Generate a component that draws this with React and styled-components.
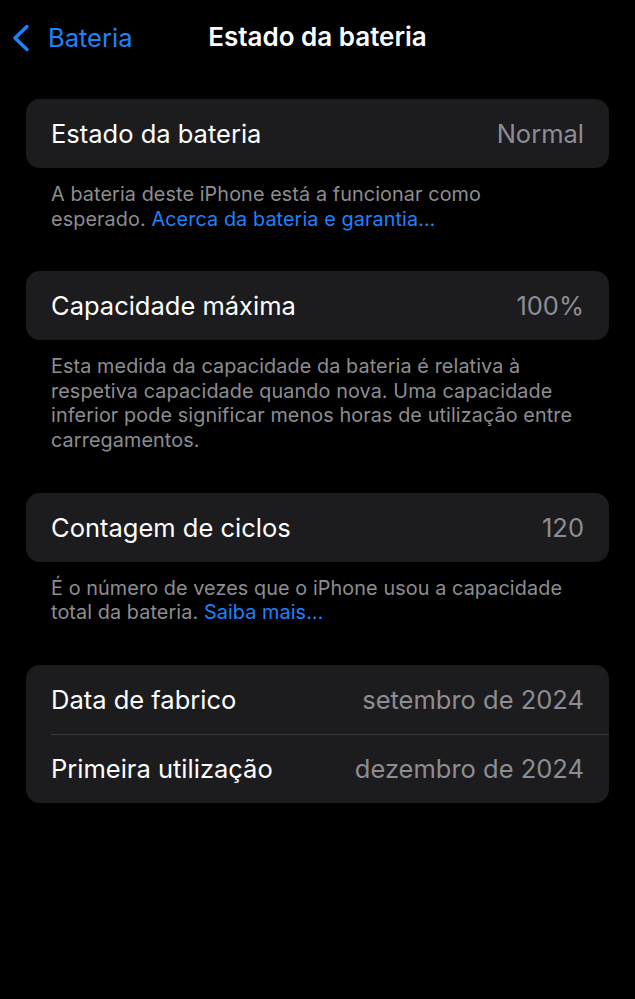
import styled, { createGlobalStyle } from "styled-components";

const GlobalStyle = createGlobalStyle`
  html, body {
    margin: 0;
    padding: 0;
    background: #000000;
  }
  body {
    font-family: Inter, "Noto Sans", sans-serif;
    -webkit-font-smoothing: antialiased;
  }
`;

const sections = [
  {
    rows: [{ label: "Estado da bateria", value: "Normal" }],
    footer: "A bateria deste iPhone está a funcionar como esperado.",
    link: "Acerca da bateria e garantia…",
  },
  {
    rows: [{ label: "Capacidade máxima", value: "100%" }],
    footer:
      "Esta medida da capacidade da bateria é relativa à respetiva capacidade quando nova. Uma capacidade inferior pode significar menos horas de utilização entre carregamentos.",
  },
  {
    rows: [{ label: "Contagem de ciclos", value: "120" }],
    footer: "É o número de vezes que o iPhone usou a capacidade total da bateria.",
    link: "Saiba mais…",
  },
  {
    rows: [
      { label: "Data de fabrico", value: "setembro de 2024" },
      { label: "Primeira utilização", value: "dezembro de 2024" },
    ],
  },
];

const App = () => {
  return (
    <Page>
      <GlobalStyle />
      <NavBar>
        <BackButton>
          <svg width="22" height="28" viewBox="0 0 22 28" fill="none">
            <path
              d="M17 2.5 L5 14 L17 25.5"
              stroke="#1a84ff"
              strokeWidth="3.4"
              strokeLinecap="round"
              strokeLinejoin="round"
            />
          </svg>
          <span>Bateria</span>
        </BackButton>
        <NavTitle>Estado da bateria</NavTitle>
      </NavBar>
      <Content>
        {sections.map((section, i) => (
          <Section key={i}>
            <Card>
              {section.rows.map((row, j) => (
                <Row key={row.label} $divider={j > 0}>
                  <Label>{row.label}</Label>
                  <Value>{row.value}</Value>
                </Row>
              ))}
            </Card>
            {section.footer && (
              <Footer>
                {section.footer}
                {section.link && (
                  <>
                    {" "}
                    <Link>{section.link}</Link>
                  </>
                )}
              </Footer>
            )}
          </Section>
        ))}
      </Content>
    </Page>
  );
};
export default App;

const Page = styled.div`
  width: 635px;
  min-height: 999px;
  background: #000000;
  color: #ffffff;
  overflow: hidden;
`;

const NavBar = styled.div`
  position: relative;
  height: 74px;
  display: flex;
  align-items: center;
  justify-content: center;
`;

const BackButton = styled.div`
  position: absolute;
  left: 10px;
  top: 22px;
  display: flex;
  align-items: center;
  gap: 16px;
  color: #1a84ff;
  font-size: 25.5px;
  svg {
    display: block;
  }
`;

const NavTitle = styled.h1`
  margin: 0;
  margin-top: -1px;
  font-size: 26px;
  font-weight: 600;
  color: #ffffff;
`;

const Content = styled.div`
  display: flex;
  flex-direction: column;
  gap: 40px;
  padding: 25px 26px 0 26px;
`;

const Section = styled.div`
  display: flex;
  flex-direction: column;
`;

const Card = styled.div`
  background: #1c1c1e;
  border-radius: 14px;
  overflow: hidden;
`;

const Row = styled.div`
  position: relative;
  height: 69px;
  display: flex;
  align-items: center;
  justify-content: space-between;
  padding: 0 25px;
  &::before {
    content: "";
    display: ${(p) => (p.$divider ? "block" : "none")};
    position: absolute;
    top: 0;
    left: 25px;
    right: 0;
    height: 1px;
    background: #38383a;
  }
`;

const Label = styled.span`
  font-size: 25.5px;
  color: #ffffff;
`;

const Value = styled.span`
  font-size: 25.5px;
  color: #8d8d93;
`;

const Footer = styled.p`
  margin: 14px 0 0 0;
  padding: 0 30px 0 25px;
  font-size: 19.8px;
  line-height: 24.6px;
  letter-spacing: 0.1px;
  color: #8d8d93;
`;

const Link = styled.span`
  color: #1a84ff;
`;
